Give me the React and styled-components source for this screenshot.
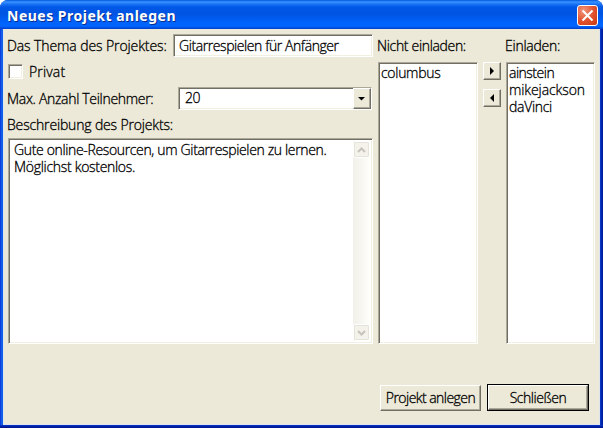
import React from "react";
import styled, { createGlobalStyle } from "styled-components";

const Global = createGlobalStyle`
  * { box-sizing: border-box; }
  html, body { margin: 0; padding: 0; background: #fff; overflow: hidden; }
`;

const Window = styled.main`
  width: 603px;
  height: 428px;
  display: flex;
  flex-direction: column;
  border-radius: 8px 8px 0 0;
  overflow: hidden;
  background:
    linear-gradient(#0a3fd0, #0024ac 1px, #00138c 3px) 0 100% / 100% 3px no-repeat,
    linear-gradient(90deg, #0831d9 0, #166aee 2px, #0855dd 3px, #0a3fd0 600px, #001ea0 602px);
  font-family: "Open Sans", "Noto Sans", sans-serif;
  font-weight: 300;
  font-size: 14px;
  color: #000;
`;

const TitleBar = styled.header`
  height: 29px;
  flex: none;
  display: flex;
  align-items: center;
  justify-content: space-between;
  padding: 3px 5px 0 7px;
  background: linear-gradient(#0058e0 0, #3a93ff 2px, #1b75f5 4px, #0058e6 7px, #0054e3 14px, #0062fb 22px, #0066ff 26px, #005af0 27px, #003dcc 29px);
`;

const Title = styled.h1`
  margin: 0;
  font: 700 14px/20px "Noto Sans", sans-serif;
  letter-spacing: ${(p) => p.$spacing}px;
  color: #fff;
  text-shadow: 1px 1px 0 #0b2d8c;
  white-space: nowrap;
`;

const CloseButton = styled.button`
  width: 21px;
  height: 21px;
  padding: 0;
  margin-top: -2px;
  display: grid;
  place-items: center;
  border: 1px solid #fff;
  border-radius: 3px;
  background: radial-gradient(circle at 30% 25%, #f0957a, #e0502c 55%, #c83a12);
`;

const Body = styled.section`
  height: 396px;
  margin: 0 3px 0 3px;
  padding: 5px 5px 0;
  background: #ece9d8;
  box-shadow: inset 1px 0 0 #dfe6ee, inset -1px 0 0 #dfe3ee, inset 0 -1px 0 #dfe3ee;
  display: flex;
  flex-direction: column;
`;

const Columns = styled.div`
  display: flex;
  height: 310px;
`;

const Form = styled.div`
  width: 365px;
  margin-right: 5px;
  display: flex;
  flex-direction: column;
`;

const Row = styled.div`
  display: flex;
  align-items: ${(p) => (p.$top ? "flex-start" : "center")};
  padding-top: ${(p) => p.$top || 0}px;
  margin-left: ${(p) => (p.$outdent ? -1 : 0)}px;
  justify-content: ${(p) => (p.$start ? "flex-start" : "space-between")};
  height: ${(p) => p.$height}px;
  flex: none;
`;

const Label = styled.span`
  line-height: 18px;
  white-space: nowrap;
  letter-spacing: ${(p) => p.$spacing || 0}px;
  -webkit-text-stroke: 0.3px #000;
`;

const Sunken = styled.div`
  background: #fff;
  border: 1px solid;
  border-color: #aca899 #fff #fff #aca899;
  box-shadow: inset 1px 1px 0 #716f64, inset -1px -1px 0 #f1efe2;
`;

const TextInput = styled(Sunken)`
  width: 200px;
  height: 23px;
  padding: 1px 5px;
`;

const Checkbox = styled(Sunken)`
  width: 15px;
  height: 15px;
  margin-right: 6px;
`;

const Select = styled(Sunken)`
  width: 194px;
  height: 23px;
  margin: -2px 1px 0 0;
  padding: 2px 0 2px 6px;
  display: flex;
  align-items: center;
  justify-content: space-between;
`;

const Raised = styled.button`
  padding: 0;
  display: grid;
  place-items: center;
  font: inherit;
  color: #000;
  background: #ece9d8;
  border: 1px solid;
  border-color: #fff #716f64 #716f64 #fff;
  box-shadow: inset -1px -1px 0 #aca899;
`;

const DropButton = styled(Raised)`
  width: 18px;
  height: 21px;
`;

const MoveButton = styled(Raised)`
  width: 18px;
  height: 18px;
`;

const TextArea = styled(Sunken)`
  width: 365px;
  height: 207px;
  padding: 2px;
  display: flex;
  justify-content: space-between;
`;

const TextLines = styled.div`
  padding: 0 0 0 3px;
  display: flex;
  flex-direction: column;
`;

const Line = styled.span`
  height: 17px;
  line-height: 17px;
  white-space: nowrap;
  letter-spacing: ${(p) => p.$spacing || 0}px;
  -webkit-text-stroke: 0.3px #000;
`;

const ScrollTrack = styled.div`
  width: 17px;
  display: flex;
  flex-direction: column;
  justify-content: space-between;
  background: linear-gradient(90deg, #f1f0e9, #fefefb);
`;

const ScrollButton = styled.span`
  width: 17px;
  height: 17px;
  display: grid;
  place-items: center;
  border: 1px solid #fff;
  border-radius: 2px;
  background: #f3f2eb;
  box-shadow: inset 0 0 0 1px #e6e4da;
`;

const ListColumn = styled.div`
  width: ${(p) => p.$width}px;
  display: flex;
  flex-direction: column;
`;

const ListBox = styled(Sunken)`
  height: 282px;
  padding: 1px 0 0 2px;
  display: flex;
  flex-direction: column;
`;

const Movers = styled.div`
  width: 28px;
  padding-top: 28px;
  display: flex;
  flex-direction: column;
  align-items: center;
  gap: 9px;
`;

const Footer = styled.footer`
  display: flex;
  justify-content: flex-end;
  align-items: center;
  gap: 6px;
  margin-top: 40px;
  padding-right: 6px;
`;

const Action = styled(Raised)`
  width: 101px;
  height: 26px;
`;

const DefaultFrame = styled.div`
  border: 1px solid #000;
  display: flex;
  width: 102px;
  height: 27px;
  & > button { width: 100%; height: 100%; }
`;

const Chevron = ({ down }) => (
  <svg width="9" height="6" viewBox="0 0 9 6" fill="none" stroke="#c6c4b9" strokeWidth="2">
    <path d={down ? "M1 1L4.5 4.5L8 1" : "M1 5L4.5 1.5L8 5"} />
  </svg>
);

const Arrow = ({ dir }) => {
  const d = { right: "M3 1L7 5L3 9Z", left: "M7 1L3 5L7 9Z", down: "M1 4H8L4.5 7.5Z" }[dir];
  return (
    <svg width="10" height="10" viewBox="0 0 10 10">
      <path d={d} />
    </svg>
  );
};

export default function App() {
  return (
    <>
      <Global />
      <Window>
        <TitleBar>
          <Title $spacing={0.5}>Neues Projekt anlegen</Title>
          <CloseButton aria-label="Schließen">
            <svg width="13" height="13" viewBox="0 0 13 13" stroke="#fff" strokeWidth="2">
              <path d="M1.5 1.5L11.5 11.5M11.5 1.5L1.5 11.5" />
            </svg>
          </CloseButton>
        </TitleBar>
        <Body>
          <Columns>
            <Form>
              <Row $height={23} $outdent>
                <Label $spacing={-0.1}>Das Thema des Projektes:</Label>
                <TextInput><Label $spacing={-0.42}>Gitarrespielen für Anfänger</Label></TextInput>
              </Row>
              <Row $height={29} $start>
                <Checkbox />
                <Label $spacing={0.15}>Privat</Label>
              </Row>
              <Row $height={26} $outdent>
                <Label $spacing={-0.31}>Max. Anzahl Teilnehmer:</Label>
                <Select>
                  <Label $spacing={-0.4}>20</Label>
                  <DropButton aria-label="Anzahl wählen"><Arrow dir="down" /></DropButton>
                </Select>
              </Row>
              <Row $height={26} $start $outdent><Label $spacing={-0.16}>Beschreibung des Projekts:</Label></Row>
              <TextArea>
                <TextLines>
                  <Line $spacing={-0.35}>Gute online-Resourcen, um Gitarrespielen zu lernen.</Line>
                  <Line $spacing={-0.3}>Möglichst kostenlos.</Line>
                </TextLines>
                <ScrollTrack>
                  <ScrollButton><Chevron /></ScrollButton>
                  <ScrollButton><Chevron down /></ScrollButton>
                </ScrollTrack>
              </TextArea>
            </Form>
            <ListColumn $width={100}>
              <Row $height={28} $start $top={3} $outdent><Label $spacing={-0.33}>Nicht einladen:</Label></Row>
              <ListBox><Line $spacing={-0.3}>columbus</Line></ListBox>
            </ListColumn>
            <Movers>
              <MoveButton aria-label="Einladen"><Arrow dir="right" /></MoveButton>
              <MoveButton aria-label="Nicht einladen"><Arrow dir="left" /></MoveButton>
            </Movers>
            <ListColumn $width={89}>
              <Row $height={28} $start $top={3} $outdent><Label $spacing={-0.25}>Einladen:</Label></Row>
              <ListBox>
                <Line $spacing={-0.5}>ainstein</Line>
                <Line $spacing={-0.1}>mikejackson</Line>
                <Line $spacing={-0.3}>daVinci</Line>
              </ListBox>
            </ListColumn>
          </Columns>
          <Footer>
            <Action><Label $spacing={-0.55}>Projekt anlegen</Label></Action>
            <DefaultFrame><Raised><Label $spacing={-0.45}>Schließen</Label></Raised></DefaultFrame>
          </Footer>
        </Body>
      </Window>
    </>
  );
}
